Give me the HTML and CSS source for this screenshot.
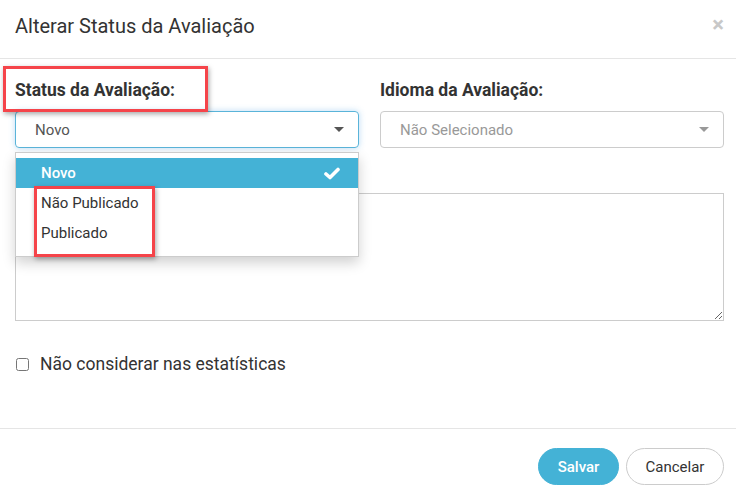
FILE: index.html
```html
<!DOCTYPE html>
<html lang="pt">
<head>
<meta charset="utf-8">
<link rel="stylesheet" href="styles.css">
</head>
<body>
<div class="modal">
  <div class="modal-header">
    <h4 class="title">Alterar Status da Avaliação</h4>
    <span class="close">×</span>
  </div>
  <div class="modal-body">
    <div class="row">
      <div class="col">
        <label class="label">Status da Avaliação:</label>
        <div class="select focus">
          <span>Novo</span>
          <span class="caret"></span>
        </div>
        <div class="menu">
          <div class="item active"><span>Novo</span>
            <svg class="check" width="16" height="13" viewBox="0 0 16 13"><path d="M2 7 L6 10.5 L14 2.5" fill="none" stroke="#fff" stroke-width="3.6" stroke-linecap="round" stroke-linejoin="round"/></svg>
          </div>
          <div class="item">Não Publicado</div>
          <div class="item">Publicado</div>
        </div>
        <div class="hl hl-label"></div>
        <div class="hl hl-items"></div>
      </div>
      <div class="col">
        <label class="label">Idioma da Avaliação:</label>
        <div class="select placeholder">
          <span>Não Selecionado</span>
          <span class="caret light"></span>
        </div>
      </div>
    </div>
    <textarea class="textarea"></textarea>
    <label class="check-row"><input type="checkbox"> <span>Não considerar nas estatísticas</span></label>
  </div>
  <div class="modal-footer">
    <button class="btn primary">Salvar</button>
    <button class="btn default">Cancelar</button>
  </div>
</div>
</body>
</html>
```
FILE: styles.css
```css
* { box-sizing: border-box; }
html, body { margin: 0; padding: 0; background: #fff; }
body { font-family: Roboto, "Liberation Sans", Arial, sans-serif; color: #333; width: 736px; height: 500px; overflow: hidden; }

.modal { width: 736px; }
.modal-header {
  height: 59px;
  border-bottom: 1px solid #e5e5e5;
  display: flex;
  align-items: flex-start;
  justify-content: space-between;
  padding: 13px 12px 0 15px;
}
.title { margin: 0; font-size: 20px; font-weight: 400; line-height: 26px; color: #333; }
.close { font-size: 22px; font-weight: 700; color: #c8c8c8; line-height: 16px; margin-top: 4px; }

.modal-body { padding: 20px 12px 0 15px; }
.row { display: grid; grid-template-columns: 344px 344px; column-gap: 21px; }
.col { position: relative; }
.label { display: block; font-size: 17.5px; font-weight: 700; line-height: 20px; margin-bottom: 11px; padding-top: 1px; color: #333; }

.select {
  height: 37px;
  border: 1px solid #ccc;
  border-radius: 4px;
  display: flex;
  align-items: center;
  justify-content: space-between;
  padding: 0 14px 0 19px;
  font-size: 15px;
  color: #555;
}
.select.focus {
  border-color: #5ab4d9;
  box-shadow: 0 0 6px rgba(102, 175, 233, 0.45);
}
.select.placeholder { color: #999; }
.caret {
  width: 0; height: 0;
  border-left: 5px solid transparent;
  border-right: 5px solid transparent;
  border-top: 5px solid #555;
}
.caret.light { border-top-color: #999; }

.menu {
  position: absolute;
  left: 0; top: 73px;
  width: 344px;
  background: #fff;
  border: 1px solid #ccc;
  box-shadow: 0 6px 12px rgba(0,0,0,0.18);
  padding: 5px 0 8px;
  z-index: 5;
}
.item {
  height: 30px;
  display: flex;
  align-items: center;
  justify-content: space-between;
  padding: 0 18px 0 25px;
  font-size: 15px;
  color: #333;
}
.item.active { background: #44b2d6; color: #fff; font-weight: 500; }
.check { display: block; }

.hl {
  position: absolute;
  border: 3px solid #f5444a;
  box-shadow: 1px 2px 5px rgba(0,0,0,0.35);
  z-index: 6;
}
.hl-label { left: -12px; top: -13px; width: 205px; height: 46px; }
.hl-items { left: 19px; top: 107px; width: 121px; height: 71px; }

.textarea {
  display: block;
  width: 709px;
  height: 128px;
  margin-top: 45px;
  border: 1px solid #ccc;
  border-radius: 0;
  resize: both;
  font-family: inherit;
}
.check-row {
  display: flex;
  align-items: center;
  margin-top: 32px;
  font-size: 17.5px;
  color: #333;
  height: 22px;
}
.check-row input { margin: 0 11px 0 1px; width: 13px; height: 13px; }

.modal-footer {
  margin-top: 53px;
  border-top: 1px solid #e5e5e5;
  display: flex;
  justify-content: flex-end;
  gap: 7px;
  padding: 19px 12px 0 15px;
}
.btn {
  height: 37px;
  border-radius: 19px;
  font-family: inherit;
  font-size: 15px;
  padding: 0;
  cursor: pointer;
}
.btn.primary { width: 81px; background: #44b2d6; border: 1px solid #44b2d6; color: #fff; font-weight: 500; }
.btn.default { width: 98px; background: #fff; border: 1px solid #ccc; color: #333; }
```
